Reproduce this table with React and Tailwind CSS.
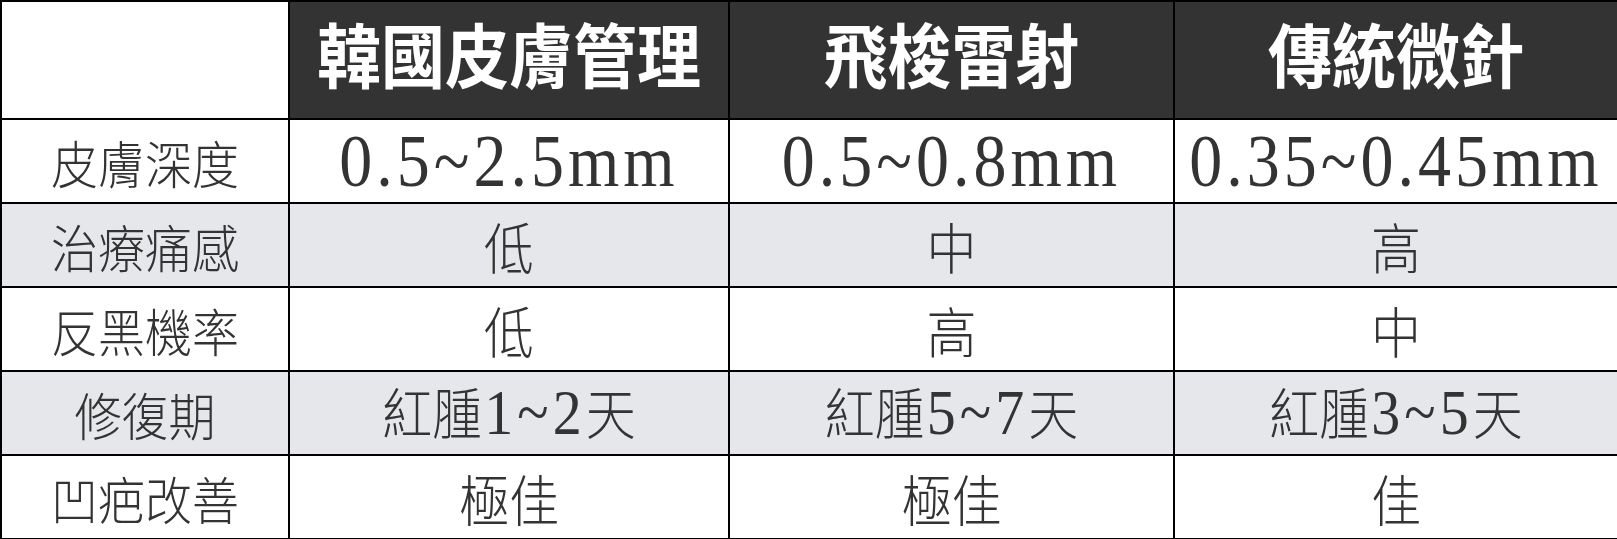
import React from "react";

const cjk = { fontFamily: '"Noto Sans CJK TC", "Noto Sans CJK SC", sans-serif' };

const rows = [
  { label: "皮膚深度", cells: ["0.5~2.5mm", "0.5~0.8mm", "0.35~0.45mm"], serif: true, gray: false },
  { label: "治療痛感", cells: ["低", "中", "高"], gray: true },
  { label: "反黑機率", cells: ["低", "高", "中"], gray: false },
  { label: "修復期", cells: [["紅腫", "1~2", "天"], ["紅腫", "5~7", "天"], ["紅腫", "3~5", "天"]], gray: true },
  { label: "凹疤改善", cells: ["極佳", "極佳", "佳"], gray: false },
];

function Cell({ value, serif }) {
  if (Array.isArray(value)) {
    return (
      <span className="inline-flex items-baseline scale-y-[1.1]">
        <span className="font-light text-[50px]" style={cjk}>{value[0]}</span>
        <span className="text-[58px] font-['Liberation_Serif'] tracking-[4px] pl-[2px]">{value[1]}</span>
        <span className="font-light text-[50px]" style={cjk}>{value[2]}</span>
      </span>
    );
  }
  if (serif) {
    return (
      <span className="inline-block scale-y-[1.12] text-[66px] tracking-[4px] font-['Liberation_Serif']">
        {value}
      </span>
    );
  }
  return (
    <span className="inline-block scale-y-[1.1] font-light text-[50px]" style={cjk}>
      {value}
    </span>
  );
}

export default function App() {
  return (
    <div className="w-[1617px] h-[539px] bg-white">
      <table className="w-[1617px] border-collapse table-fixed text-[#333]">
        <colgroup>
          <col className="w-[288px]" />
          <col className="w-[440px]" />
          <col className="w-[445px]" />
          <col className="w-[444px]" />
        </colgroup>
        <thead>
          <tr className="h-[118px]">
            <th className="border-2 border-black bg-white"></th>
            {["韓國皮膚管理", "飛梭雷射", "傳統微針"].map((h) => (
              <th
                key={h}
                className="border-2 border-black bg-[#333333] text-white leading-none text-center p-0"
              >
                <span className="inline-block -translate-y-[8px] scale-y-110 text-[64px] font-bold" style={cjk}>
                  {h}
                </span>
              </th>
            ))}
          </tr>
        </thead>
        <tbody>
          {rows.map((r) => (
            <tr key={r.label} className={`h-[84px] ${r.gray ? "bg-[#e6e7eb]" : "bg-white"}`}>
              <td className="border-2 border-black text-center leading-none p-0">
                <span className="inline-block scale-y-[1.1] font-light text-[47px]" style={cjk}>
                  {r.label}
                </span>
              </td>
              {r.cells.map((c, i) => (
                <td key={i} className="border-2 border-black text-center leading-none p-0">
                  <Cell value={c} serif={r.serif} />
                </td>
              ))}
            </tr>
          ))}
        </tbody>
      </table>
    </div>
  );
}
